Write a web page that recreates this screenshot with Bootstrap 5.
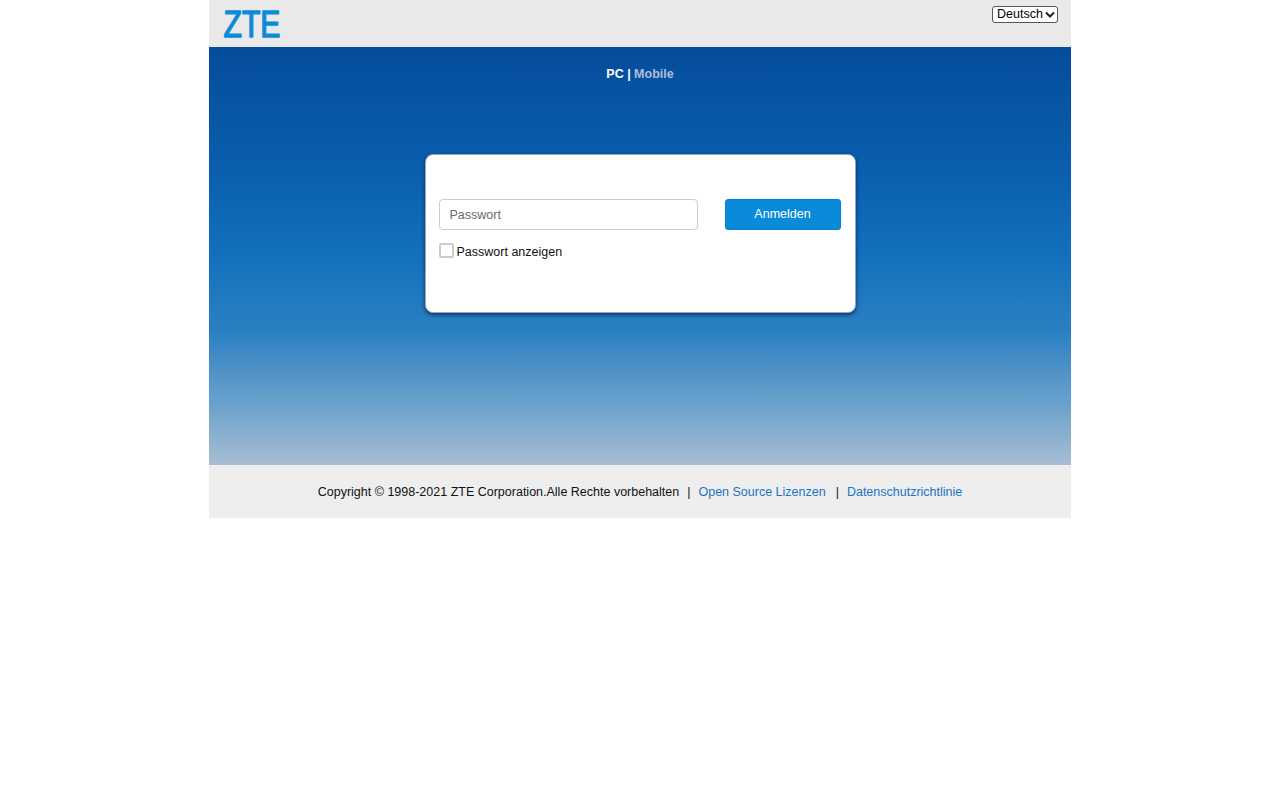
<!DOCTYPE html>
<html lang="de">
<head>
<meta charset="utf-8">
<title>ZTE</title>
<link rel="stylesheet" href="https://cdn.jsdelivr.net/npm/bootstrap@5.3.0/dist/css/bootstrap.min.css">
<style>
body{font-family:"Liberation Sans",Arial,sans-serif;font-size:12.5px;color:#000;background:#fff}
.zt-page{width:862px}
.zt-head{height:47px;background:#e9e9e9;padding:10px 13px 0 14px}
.zt-logo{display:block;width:58px;height:28px;overflow:visible}
.zt-logo text{font-family:"Liberation Sans",Arial,sans-serif;font-size:36px;fill:#0a8bd9;stroke:#0a8bd9;stroke-width:1.4px;stroke-linejoin:round}
.zt-lang.form-select{width:66px;height:17px;margin-top:-4px;padding:0 12px 0 4px;font-size:12.5px;line-height:15px;color:#000;border:1px solid #555;border-radius:3px;background-color:#fff;background-image:url("data:image/svg+xml,%3csvg xmlns='http://www.w3.org/2000/svg' viewBox='0 0 10 8'%3e%3cpath fill='none' stroke='%23222' stroke-width='2' d='M1 1.5l4 4 4-4'/%3e%3c/svg%3e");background-position:right 2px center;background-size:10px 8px}
.zt-hero{height:418px;padding-top:19px;background:linear-gradient(180deg,#054c9c 0,#0a5fae 30%,#1370bd 50%,#2b80c2 68%,#6aa0cb 85%,#a7bdd3 100%)}
.zt-mode{height:88px;font-weight:700;line-height:16px;color:#fff}
.zt-mode a{color:#a9bfdc;text-decoration:none}
.zt-box{width:431px;height:159px;padding:44px 14px 0 13px;background:#fff;border:1px solid #9aa6b4;border-radius:8px;box-shadow:0 2px 4px rgba(0,30,80,.75)}
.zt-pass.form-control{width:259px;height:31px;padding:0 10px;font-size:12.5px;border:1px solid #ccc;border-radius:4px;color:#000}
.zt-pass.form-control::placeholder{color:#6b6b6b}
.zt-btn.btn{width:116px;height:31px;padding:0;font-size:12.5px;color:#fff;background:#0a8bd9;border:1px solid #0b80c8;border-radius:3px}
.zt-check.form-check-input{width:15px;height:15px;margin:0 3px 0 0;border:2px solid #ccc;border-radius:2px;flex:none}
.zt-showrow{margin-top:13px;line-height:16px;color:#111}
.zt-showrow label{padding-top:1px}
.zt-foot{height:53px;padding-top:1px;background:#eee;color:#111}
.zt-foot a{color:#1a73c5;text-decoration:none}
.zt-sep{margin:0 8px}
.zt-sep-wide{margin:0 8px 0 10px}
</style>
</head>
<body>
<div class="zt-page mx-auto">
  <header class="zt-head d-flex justify-content-between align-items-start">
    <svg class="zt-logo" viewBox="0 0 58 28" role="img" aria-label="ZTE"><text x="0.5" y="26.5" textLength="57" lengthAdjust="spacingAndGlyphs">ZTE</text></svg>
    <select class="zt-lang form-select" aria-label="Sprache"><option>Deutsch</option><option>English</option></select>
  </header>
  <main class="zt-hero">
    <div class="zt-mode text-center">PC | <a href="#">Mobile</a></div>
    <div class="zt-box mx-auto">
      <div class="d-flex justify-content-between">
        <input class="zt-pass form-control" type="password" placeholder="Passwort">
        <button class="zt-btn btn" type="button">Anmelden</button>
      </div>
      <div class="zt-showrow d-flex align-items-start">
        <input class="zt-check form-check-input" type="checkbox" id="show">
        <label for="show">Passwort anzeigen</label>
      </div>
    </div>
  </main>
  <footer class="zt-foot d-flex justify-content-center align-items-center">
    <span>Copyright © 1998-2021 ZTE Corporation.Alle Rechte vorbehalten</span>
    <span class="zt-sep">|</span>
    <a href="#">Open Source Lizenzen</a>
    <span class="zt-sep-wide">|</span>
    <a href="#">Datenschutzrichtlinie</a>
  </footer>
</div>
<script src="https://cdn.jsdelivr.net/npm/bootstrap@5.3.0/dist/js/bootstrap.bundle.min.js"></script>
</body>
</html>
